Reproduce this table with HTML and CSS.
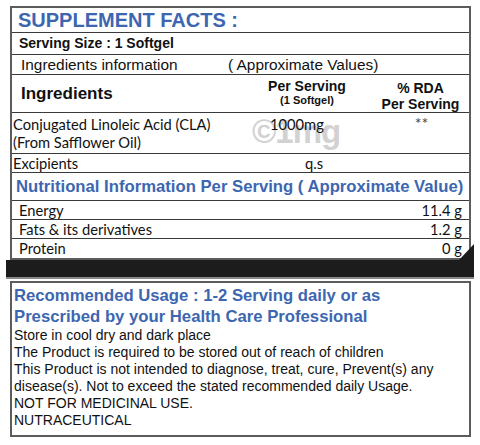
FILE: index.html
```html
<!DOCTYPE html>
<html lang="en">
<head>
    <meta charset="UTF-8">
    <meta name="viewport" content="width=device-width, initial-scale=1.0">
    <title>Supplement Facts</title>
    <link rel="stylesheet" href="styles.css">
</head>
<body>

    <div class="label">
        <div class="facts">
            <div class="row title-row">SUPPLEMENT FACTS :</div>
            <div class="row serving-row">Serving Size : 1 Softgel</div>
            <div class="row info-row">
                <span class="info-left">Ingredients information</span>
                <span>( Approximate Values)</span>
            </div>
            <div class="row cols head-row">
                <div class="col-name">Ingredients</div>
                <div class="col-mid">
                    <div>Per Serving</div>
                    <div class="small">(1 Softgel)</div>
                </div>
                <div class="col-rda">
                    <div>% RDA</div>
                    <div>Per Serving</div>
                </div>
            </div>
            <div class="row cols cla-row">
                <div class="col-name myriad">Conjugated Linoleic Acid (CLA)<br>(From Safflower Oil)</div>
                <div class="col-mid myriad amount">1000mg</div>
                <div class="col-rda myriad stars">**</div>
                <span class="watermark">&copy;1mg</span>
            </div>
            <div class="row cols exc-row">
                <div class="col-name myriad">Excipients</div>
                <div class="col-mid myriad qs">q.s</div>
                <div class="col-rda"></div>
            </div>
            <div class="row nutri-title">Nutritional Information Per Serving ( Approximate Value)</div>
            <div class="row nutri-row myriad">
                <span>Energy</span>
                <span>11.4 g</span>
            </div>
            <div class="row nutri-row myriad">
                <span>Fats &amp; its derivatives</span>
                <span>1.2 g</span>
            </div>
            <div class="row nutri-row last myriad">
                <span>Protein</span>
                <span>0 g</span>
            </div>
        </div>

        <div class="black-bar"></div>

        <div class="usage">
            <div class="usage-title">Recommended Usage : 1-2 Serving daily or as<br>Prescribed by your Health Care Professional</div>
            <p>Store in cool dry and dark place</p>
            <p>The Product is required to be stored out of reach of children</p>
            <p>This Product is not intended to diagnose, treat, cure, Prevent(s) any disease(s). Not to exceed the stated recommended daily Usage.</p>
            <p>NOT FOR MEDICINAL USE.</p>
            <p>NUTRACEUTICAL</p>
        </div>
    </div>

</body>
</html>
```

FILE: styles.css
```css
body {
    margin: 0;
    background-color: #FFFFFF;
    color: #111;
    font-family: 'Liberation Sans', Arial, sans-serif;
}

.label {
    padding: 6px 9px 0 10px;
}

.facts {
    border: 2px solid #5c5c5c;
}

.row {
    box-sizing: border-box;
    border-bottom: 1px solid #3a3a3a;
}

.row.last {
    border-bottom: none;
}

.title-row {
    height: 25px;
    padding-left: 6px;
    color: #3d66b1;
    font-size: 20px;
    font-weight: bold;
    line-height: 24px;
}

.serving-row {
    height: 22px;
    padding-left: 7px;
    font-size: 14px;
    font-weight: bold;
    line-height: 21px;
}

.info-row {
    display: flex;
    height: 20px;
    font-size: 15.4px;
    line-height: 19px;
}

.info-left {
    width: 207px;
    padding-left: 9px;
}

.cols {
    display: grid;
    grid-template-columns: 238px 114px 1fr;
}

.head-row {
    height: 38px;
    font-weight: bold;
    font-size: 14px;
}

.head-row .col-name {
    padding-left: 9px;
    font-size: 17px;
    line-height: 38px;
}

.head-row .col-mid {
    text-align: center;
    padding-top: 3px;
    line-height: 16px;
}

.head-row .col-mid .small {
    font-size: 11px;
    line-height: 13px;
}

.head-row .col-rda {
    text-align: center;
    padding: 5px 0 0 8px;
    line-height: 16px;
}

.myriad {
    font-family: Lato, 'Open Sans', sans-serif;
    font-size: 14.7px;
}

.cla-row {
    position: relative;
    height: 41px;
    padding-top: 2px;
    line-height: 18px;
}

.cla-row .col-name {
    padding-left: 1px;
}

.amount {
    padding-left: 20px;
    position: relative;
    z-index: 1;
}

.stars {
    text-align: center;
    padding-left: 10px;
    color: #444;
    font-size: 16px;
    line-height: 16px;
}

.watermark {
    position: absolute;
    left: 240px;
    top: 1px;
    color: #d2d2d2;
    font-family: 'Liberation Sans', Arial, sans-serif;
    font-size: 33px;
    font-weight: bold;
    letter-spacing: -1px;
    line-height: 36px;
}

.exc-row {
    height: 19px;
    line-height: 18px;
}

.exc-row .col-name {
    padding-left: 1px;
}

.qs {
    padding-left: 55px;
}

.nutri-title {
    height: 28px;
    padding-left: 4px;
    color: #3d66b1;
    font-size: 16.7px;
    font-weight: bold;
    line-height: 27px;
    white-space: nowrap;
}

.nutri-row {
    display: flex;
    justify-content: space-between;
    height: 19px;
    padding: 0 7px 0 7px;
    line-height: 19px;
}

.black-bar {
    position: relative;
    height: 17px;
    margin: 0 -3px 0 -4px;
    background-color: #1c1c1c;
    border-bottom: 2px solid #8a8a8a;
}

.black-bar::before {
    content: "";
    position: absolute;
    right: 0;
    bottom: 100%;
    width: 0;
    height: 0;
    border-left: 15px solid transparent;
    border-bottom: 16px solid #1c1c1c;
}

.usage {
    margin-top: 2px;
    border: 2px solid #5c5c5c;
    height: 156px;
    box-sizing: border-box;
    padding: 2px 4px 0 2px;
}

.usage-title {
    color: #3d66b1;
    font-size: 16.7px;
    font-weight: bold;
    line-height: 21px;
}

.usage p {
    margin: 0;
    font-size: 14px;
    line-height: 17px;
}
```
